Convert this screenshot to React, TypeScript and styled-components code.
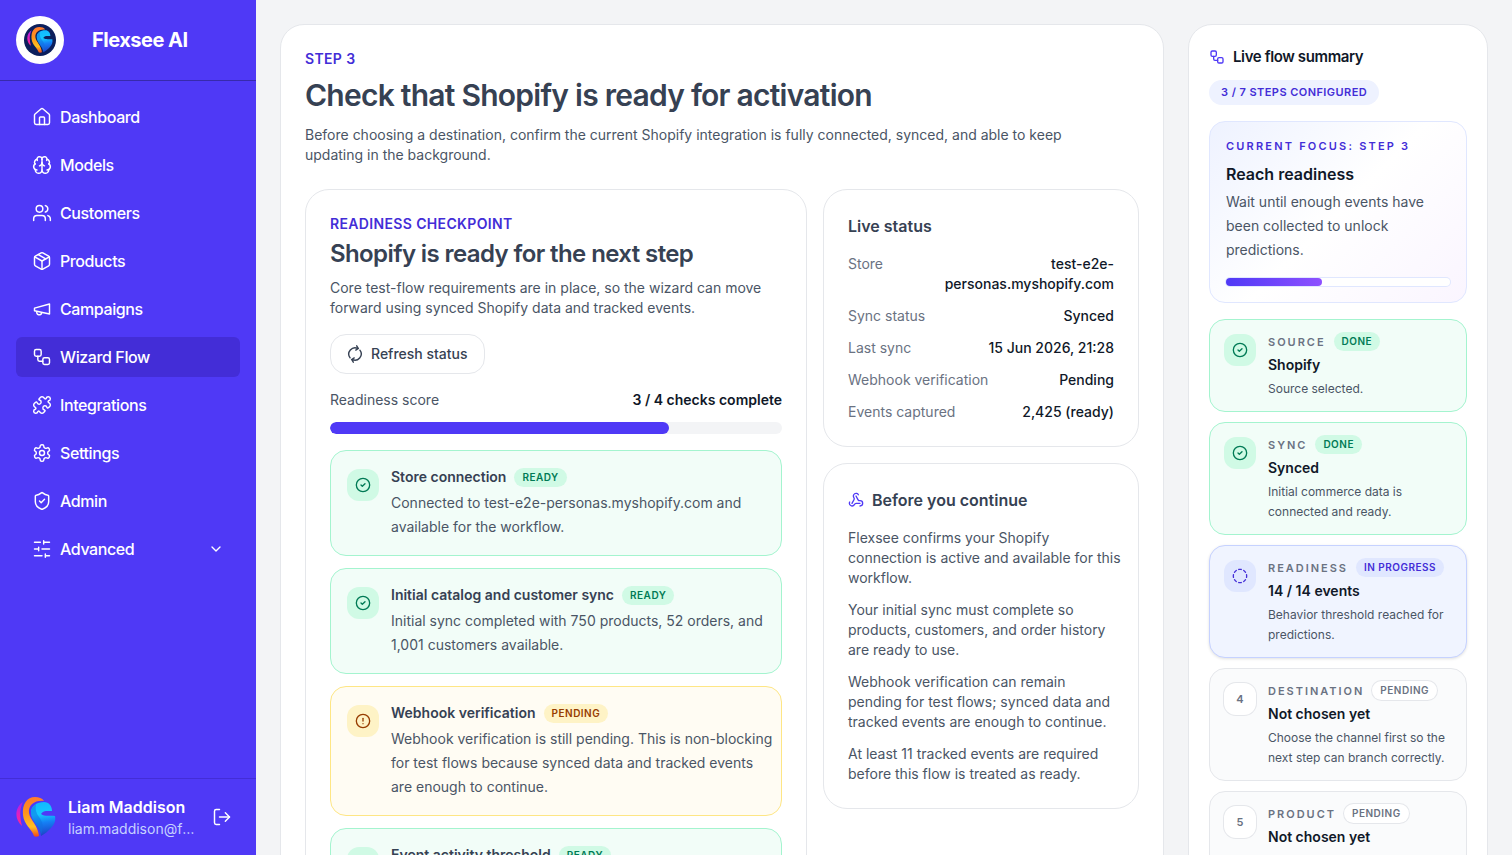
import React from "react";
import styled, { createGlobalStyle, css } from "styled-components";
import {
  Brain,
  ChevronDown,
  CircleAlert,
  CircleCheck,
  CircleDashed,
  House,
  LogOut,
  Package,
  Puzzle,
  ShieldCheck,
  Users,
  Webhook,
  Workflow,
} from "lucide-react";

const color = {
  indigo50: "#eef2ff",
  indigo100: "#e0e7ff",
  indigo200: "#c6d2ff",
  indigo600: "#4f39f6",
  indigo700: "#432dd7",
  indigo800: "#372aac",
  gray50: "#f9fafb",
  gray100: "#f3f4f6",
  gray200: "#e5e7eb",
  gray500: "#6a7282",
  gray600: "#4a5565",
  gray700: "#364153",
  gray900: "#101828",
};

type Tone = "done" | "pending" | "active" | "idle";

const tones: Record<Tone, { border: string; bg: string; tile: string; text: string }> = {
  done: { border: "#a4f4cf", bg: "#f2fdf8", tile: "#d0fae5", text: "#007a55" },
  pending: { border: "#fee685", bg: "#fffcf3", tile: "#fef3c6", text: "#973c00" },
  active: { border: color.indigo200, bg: "#f0f4ff", tile: color.indigo100, text: color.indigo700 },
  idle: { border: color.gray200, bg: "#fafbfc", tile: "#ffffff", text: color.gray500 },
};

const GlobalStyle = createGlobalStyle`
  *, *::before, *::after { box-sizing: border-box; }
  body {
    margin: 0;
    background: ${color.gray100};
    color: ${color.gray900};
    font-family: Inter, "Liberation Sans", sans-serif;
    font-size: 14px;
    line-height: 20px;
    -webkit-font-smoothing: antialiased;
  }
  h1, h2, h3, h4, p, dl, dd, ul, ol { margin: 0; padding: 0; }
  ul, ol { list-style: none; }
  button { font: inherit; cursor: pointer; }
`;

/* ---------- Shell ---------- */

const Shell = styled.div`
  display: flex;
  height: 100vh;
`;

const Sidebar = styled.aside`
  display: flex;
  flex-direction: column;
  flex: none;
  width: 256px;
  background: ${color.indigo600};
  color: #ffffff;
`;

const Brand = styled.header`
  display: flex;
  align-items: center;
  gap: 28px;
  padding: 16px;
  border-bottom: 1px solid ${color.indigo800};
`;

const BrandMark = styled.span`
  display: grid;
  place-items: center;
  width: 48px;
  height: 48px;
  border-radius: 50%;
  background: #ffffff;
`;

const BrandName = styled.span`
  font-size: 20px;
  line-height: 28px;
  font-weight: 700;
  letter-spacing: -0.025em;
`;

const Nav = styled.nav`
  flex: 1;
  padding: 16px;
`;

const NavList = styled.ul`
  display: flex;
  flex-direction: column;
  gap: 8px;
`;

const navItem = css<{ $active?: boolean }>`
  display: flex;
  align-items: center;
  gap: 8px;
  width: 100%;
  height: 40px;
  padding: 0 16px;
  border: 0;
  border-radius: 6px;
  background: ${(p) => (p.$active ? color.indigo700 : "transparent")};
  color: #ffffff;
  font-size: 16px;
  line-height: 24px;
  font-weight: 500;
  letter-spacing: -0.025em;
  text-align: left;
  text-decoration: none;
`;

const NavLink = styled.a<{ $active?: boolean }>`
  ${navItem}
`;

const NavToggle = styled.button<{ $active?: boolean }>`
  ${navItem}
`;

const NavText = styled.span`
  flex: 1;
`;

const Account = styled.footer`
  display: flex;
  align-items: center;
  gap: 12px;
  padding: 16px;
  border-top: 1px solid ${color.indigo700};
`;

const AccountText = styled.div`
  flex: 1;
  min-width: 0;
`;

const AccountName = styled.p`
  font-size: 16px;
  line-height: 24px;
  font-weight: 600;
`;

const AccountMail = styled.p`
  color: ${color.indigo200};
  overflow: hidden;
  text-overflow: ellipsis;
  white-space: nowrap;
`;

const IconButton = styled.button`
  display: grid;
  place-items: center;
  padding: 8px 8px 8px 4px;
  border: 0;
  background: transparent;
  color: #ffffff;
`;

/* ---------- Content ---------- */

const Content = styled.main`
  flex: 1;
  min-width: 0;
  overflow-y: auto;
  scrollbar-width: none;
  padding: 24px;
`;

const Columns = styled.div`
  display: grid;
  grid-template-columns: minmax(0, 1fr) 300px;
  align-items: start;
  gap: 24px;
`;

const Panel = styled.section`
  padding: 24px;
  border: 1px solid ${color.gray200};
  border-radius: 24px;
  background: #ffffff;
`;

const NotesPanel = styled(Panel)`
  padding-right: 16px;
`;

const SummaryPanel = styled(Panel).attrs({ as: "aside" })`
  padding: 20px;
`;

const Eyebrow = styled.p`
  color: ${color.indigo700};
  font-weight: 600;
  letter-spacing: 0.025em;
  text-transform: uppercase;
`;

const PageTitle = styled.h1`
  margin-top: 8px;
  color: ${color.gray700};
  font-size: 30px;
  line-height: 36px;
  font-weight: 600;
  letter-spacing: -0.025em;
`;

const Lead = styled.p`
  max-width: 768px;
  margin-top: 12px;
  color: ${color.gray600};
`;

const StepGrid = styled.div`
  display: grid;
  grid-template-columns: minmax(0, 1fr) 316px;
  align-items: start;
  gap: 16px;
  margin-top: 24px;
`;

const SideStack = styled.div`
  display: flex;
  flex-direction: column;
  gap: 16px;
`;

const PanelTitle = styled.h2`
  margin-top: 4px;
  color: ${color.gray700};
  font-size: 24px;
  line-height: 32px;
  font-weight: 600;
  letter-spacing: -0.025em;
`;

const PanelText = styled.p`
  margin-top: 8px;
  color: ${color.gray600};
`;

const RefreshButton = styled.button`
  display: inline-flex;
  align-items: center;
  gap: 8px;
  height: 40px;
  margin-top: 16px;
  padding: 0 16px;
  border: 1px solid ${color.gray200};
  border-radius: 16px;
  background: #ffffff;
  color: ${color.gray700};
  font-weight: 500;
`;

const ScoreRow = styled.div`
  display: flex;
  justify-content: space-between;
  margin-top: 16px;
  color: ${color.gray600};
`;

const ScoreValue = styled.span`
  color: ${color.gray900};
  font-weight: 600;
`;

const Meter = styled.div`
  height: 12px;
  margin-top: 12px;
  border-radius: 6px;
  background: ${color.gray100};
  overflow: hidden;
`;

const MeterFill = styled.div`
  height: 100%;
  border-radius: inherit;
  background: ${color.indigo600};
`;

const CheckList = styled.ul`
  display: flex;
  flex-direction: column;
  gap: 12px;
  margin-top: 16px;
`;

const CheckCard = styled.li<{ $tone: Tone }>`
  display: flex;
  align-items: flex-start;
  gap: 12px;
  padding: 16px 8px 16px 16px;
  border: 1px solid ${(p) => tones[p.$tone].border};
  border-radius: 16px;
  background: ${(p) => tones[p.$tone].bg};
`;

const Tile = styled.span<{ $tone: Tone }>`
  display: grid;
  place-items: center;
  flex: 0 0 32px;
  height: 32px;
  margin-top: 2px;
  border-radius: 12px;
  background: ${(p) => tones[p.$tone].tile};
  box-shadow: ${(p) => (p.$tone === "idle" ? `0 0 0 1px ${color.gray200}` : "none")};
  color: ${(p) => tones[p.$tone].text};
  font-size: 11px;
  font-weight: 600;
`;

const CardBody = styled.div`
  flex: 1;
  min-width: 0;
`;

const CheckHead = styled.div`
  display: flex;
  align-items: center;
  gap: 8px;
  height: 20px;
`;

const CheckTitle = styled.h3`
  color: ${color.gray700};
  font-size: 14px;
  line-height: 20px;
  font-weight: 600;
`;

const Badge = styled.span<{ $tone: Tone }>`
  padding: 2px 8px;
  border-radius: 10px;
  background: ${(p) => tones[p.$tone].tile};
  box-shadow: ${(p) => (p.$tone === "idle" ? `0 0 0 1px ${color.gray200}` : "none")};
  color: ${(p) => tones[p.$tone].text};
  font-size: 10px;
  line-height: 15px;
  font-weight: 600;
  letter-spacing: 0.05em;
  text-transform: uppercase;
  white-space: nowrap;
`;

const CheckText = styled.p`
  margin-top: 4px;
  color: ${color.gray600};
  line-height: 24px;
`;

const SideTitle = styled.h2`
  display: flex;
  align-items: center;
  gap: 8px;
  color: ${color.gray700};
  font-size: 16px;
  line-height: 24px;
  font-weight: 600;

  svg {
    color: ${color.indigo600};
  }
`;

const Facts = styled.dl`
  display: flex;
  flex-direction: column;
  gap: 12px;
  margin-top: 16px;
`;

const Fact = styled.div`
  display: flex;
  justify-content: space-between;
  gap: 16px;
  color: ${color.gray500};
`;

const FactValue = styled.dd`
  color: ${color.gray900};
  font-weight: 500;
  text-align: right;
`;

const Notes = styled.div`
  display: flex;
  flex-direction: column;
  gap: 12px;
  margin-top: 16px;
  color: ${color.gray600};
`;

/* ---------- Flow summary ---------- */

const SummaryTitle = styled(SideTitle)`
  color: ${color.gray900};
  font-size: 15px;
  line-height: 23px;
  letter-spacing: -0.025em;
`;

const CountPill = styled.span`
  display: inline-block;
  margin-top: 12px;
  padding: 4px 12px;
  border-radius: 13px;
  background: ${color.indigo50};
  color: ${color.indigo700};
  font-size: 11px;
  line-height: 17px;
  font-weight: 600;
  letter-spacing: 0.04em;
  text-transform: uppercase;
  vertical-align: top;
`;

const FocusCard = styled.div`
  margin-top: 16px;
  padding: 16px;
  border: 1px solid ${color.indigo100};
  border-radius: 16px;
  background: linear-gradient(135deg, #eef2ff, #ffffff 50%, #faf5ff);
`;

const FocusLabel = styled.p`
  color: ${color.indigo700};
  font-size: 11px;
  line-height: 16px;
  font-weight: 600;
  letter-spacing: 0.2em;
  text-transform: uppercase;
`;

const FocusTitle = styled.h3`
  margin-top: 8px;
  font-size: 16px;
  line-height: 24px;
  font-weight: 600;
`;

const FocusMeter = styled.div`
  height: 8px;
  margin-top: 16px;
  border-radius: 4px;
  background: #ffffff;
  box-shadow: 0 0 0 1px ${color.indigo100};
`;

const FocusFill = styled.div`
  height: 100%;
  border-radius: inherit;
  background: linear-gradient(90deg, ${color.indigo600}, #8e51ff);
`;

const StepList = styled.ol`
  display: flex;
  flex-direction: column;
  gap: 10px;
  margin-top: 16px;
`;

const StepCard = styled(CheckCard)`
  padding: 12px 14px;
  box-shadow: ${(p) => (p.$tone === "active" ? "0 1px 3px rgba(0, 0, 0, 0.12)" : "none")};
`;

const StepHead = styled.div`
  display: flex;
  align-items: center;
  gap: 8px;
  height: 19px;
`;

const StepLabel = styled.span`
  color: ${color.gray500};
  font-size: 11px;
  line-height: 16px;
  font-weight: 600;
  letter-spacing: 0.18em;
  text-transform: uppercase;
`;

const StepTitle = styled.h3`
  margin-top: 4px;
  font-size: 14px;
  line-height: 20px;
  font-weight: 600;
`;

const StepText = styled.p`
  margin-top: 4px;
  color: ${color.gray600};
  font-size: 12px;
`;

/* ---------- Drawings ---------- */

type IconProps = { size?: number; strokeWidth?: number };

function LineIcon({ size = 24, strokeWidth = 2, children }: IconProps & { children: React.ReactNode }) {
  return (
    <svg
      width={size}
      height={size}
      viewBox="0 0 24 24"
      fill="none"
      stroke="currentColor"
      strokeWidth={strokeWidth}
      strokeLinecap="round"
      strokeLinejoin="round"
      aria-hidden="true"
    >
      {children}
    </svg>
  );
}

function MegaphoneIcon(props: IconProps) {
  return (
    <LineIcon {...props}>
      <path d="m3 11 18-5v12L3 14v-3z" />
      <path d="M11.6 16.8a3 3 0 1 1-5.8-1.6" />
    </LineIcon>
  );
}

function GearIcon(props: IconProps) {
  return (
    <LineIcon {...props}>
      <path d="M12.22 2h-.44a2 2 0 0 0-2 2v.18a2 2 0 0 1-1 1.73l-.43.25a2 2 0 0 1-2 0l-.15-.08a2 2 0 0 0-2.73.73l-.22.38a2 2 0 0 0 .73 2.73l.15.1a2 2 0 0 1 1 1.72v.51a2 2 0 0 1-1 1.74l-.15.09a2 2 0 0 0-.73 2.73l.22.38a2 2 0 0 0 2.73.73l.15-.08a2 2 0 0 1 2 0l.43.25a2 2 0 0 1 1 1.73V20a2 2 0 0 0 2 2h.44a2 2 0 0 0 2-2v-.18a2 2 0 0 1 1-1.73l.43-.25a2 2 0 0 1 2 0l.15.08a2 2 0 0 0 2.73-.73l.22-.39a2 2 0 0 0-.73-2.73l-.15-.08a2 2 0 0 1-1-1.74v-.5a2 2 0 0 1 1-1.74l.15-.09a2 2 0 0 0 .73-2.73l-.22-.38a2 2 0 0 0-2.73-.73l-.15.08a2 2 0 0 1-2 0l-.43-.25a2 2 0 0 1-1-1.73V4a2 2 0 0 0-2-2z" />
      <circle cx="12" cy="12" r="3" />
    </LineIcon>
  );
}

function SlidersIcon(props: IconProps) {
  return (
    <LineIcon {...props}>
      <path d="M21 4h-7M10 4H3M21 12h-9M8 12H3M21 20h-5M12 20H3M14 2v4M8 10v4M16 18v4" />
    </LineIcon>
  );
}

function RefreshIcon() {
  return (
    <svg
      width="16"
      height="20"
      viewBox="-8 -10 16 20"
      fill="none"
      stroke="currentColor"
      strokeWidth="1.4"
      strokeLinecap="round"
      strokeLinejoin="round"
      aria-hidden="true"
    >
      <path d="M-4.9 3.8A6.2 6.2 0 0 1 3-5.4M1.7-8.2 3.4-5.5.8-3.9" />
      <path d="M4.9-3.8A6.2 6.2 0 0 1-3 5.4M-1.7 8.2-3.4 5.5-.8 3.9" />
    </svg>
  );
}

function FlexseeMark({ size, id }: { size: number; id: string }) {
  return (
    <svg width={size} height={size} viewBox="0 0 40 40" aria-hidden="true">
      <defs>
        <linearGradient id={`${id}-pink`} x1="0" y1="0" x2="0" y2="1">
          <stop offset="0" stopColor="#a21ff0" />
          <stop offset="0.5" stopColor="#e01fc0" />
          <stop offset="1" stopColor="#ff2a8a" />
        </linearGradient>
        <linearGradient id={`${id}-orange`} x1="0.5" y1="0" x2="0.5" y2="1">
          <stop offset="0" stopColor="#ff7a2e" />
          <stop offset="0.4" stopColor="#ff931c" />
          <stop offset="0.75" stopColor="#ffc020" />
          <stop offset="1" stopColor="#f0451c" />
        </linearGradient>
        <linearGradient id={`${id}-blue`} x1="0.5" y1="0" x2="0.6" y2="1">
          <stop offset="0" stopColor="#12b8ff" />
          <stop offset="0.35" stopColor="#14c8ff" />
          <stop offset="0.6" stopColor="#1580f5" />
          <stop offset="1" stopColor="#1c3fc4" />
        </linearGradient>
      </defs>
      <path d="M7 5C0 9-3 21 6 29 4 21 3 13 7 5Z" fill={`url(#${id}-pink)`} />
      <path
        d="M7 18C6 7 11 0 19 0c4 0 7 1 9 4C19 3 12 8 13 16c1 7 9 12 10 23-2 1-4 1-5 0-2-7-10-11-11-21Z"
        fill={`url(#${id}-orange)`}
      />
      <path
        d="M15 15c0-6 6-10 13-10 5 0 8 4 8 9-4 0-9-1-11 3 4 3 9 1 14 2 1 5-1 9-4 12s-6 6-10 8c0-9-10-14-10-24Z"
        fill={`url(#${id}-blue)`}
      />
      <path d="M15 15c0-3 2-6 5-8-1 5 0 9 3 13 4 5 5 11 2 18 0-8-10-13-10-23Z" fill="#0f6fe0" opacity="0.5" />
    </svg>
  );
}

function BrandBadge() {
  return (
    <svg width="32" height="32" viewBox="0 0 32 32" aria-hidden="true">
      <circle cx="16" cy="16" r="16" fill="#0c1f5c" />
      <g transform="translate(3 3)">
        <FlexseeMark size={26} id="brand" />
      </g>
    </svg>
  );
}

/* ---------- Data ---------- */

const navLinks = [
  { label: "Dashboard", icon: House },
  { label: "Models", icon: Brain },
  { label: "Customers", icon: Users },
  { label: "Products", icon: Package },
  { label: "Campaigns", icon: MegaphoneIcon },
  { label: "Wizard Flow", icon: Workflow, active: true },
  { label: "Integrations", icon: Puzzle },
  { label: "Settings", icon: GearIcon },
  { label: "Admin", icon: ShieldCheck },
];

const checks: { title: string; tone: Tone; badge: string; text: string }[] = [
  {
    title: "Store connection",
    tone: "done",
    badge: "Ready",
    text: "Connected to test-e2e-personas.myshopify.com and available for the workflow.",
  },
  {
    title: "Initial catalog and customer sync",
    tone: "done",
    badge: "Ready",
    text: "Initial sync completed with 750 products, 52 orders, and 1,001 customers available.",
  },
  {
    title: "Webhook verification",
    tone: "pending",
    badge: "Pending",
    text: "Webhook verification is still pending. This is non-blocking for test flows because synced data and tracked events are enough to continue.",
  },
  {
    title: "Event activity threshold",
    tone: "done",
    badge: "Ready",
    text: "2,425 tracked events captured.",
  },
];

const facts = [
  ["Store", "test-e2e-personas.myshopify.com"],
  ["Sync status", "Synced"],
  ["Last sync", "15 Jun 2026, 21:28"],
  ["Webhook verification", "Pending"],
  ["Events captured", "2,425 (ready)"],
];

const notes = [
  "Flexsee confirms your Shopify connection is active and available for this workflow.",
  "Your initial sync must complete so products, customers, and order history are ready to use.",
  "Webhook verification can remain pending for test flows; synced data and tracked events are enough to continue.",
  "At least 11 tracked events are required before this flow is treated as ready.",
];

const steps: { label: string; tone: Tone; badge: string; title: string; text: string }[] = [
  { label: "Source", tone: "done", badge: "Done", title: "Shopify", text: "Source selected." },
  {
    label: "Sync",
    tone: "done",
    badge: "Done",
    title: "Synced",
    text: "Initial commerce data is connected and ready.",
  },
  {
    label: "Readiness",
    tone: "active",
    badge: "In progress",
    title: "14 / 14 events",
    text: "Behavior threshold reached for predictions.",
  },
  {
    label: "Destination",
    tone: "idle",
    badge: "Pending",
    title: "Not chosen yet",
    text: "Choose the channel first so the next step can branch correctly.",
  },
  {
    label: "Product",
    tone: "idle",
    badge: "Pending",
    title: "Not chosen yet",
    text: "Choose the product for this flow.",
  },
];

function ToneIcon({ tone, step }: { tone: Tone; step?: number }) {
  if (tone === "done") return <CircleCheck size={16} />;
  if (tone === "pending") return <CircleAlert size={16} />;
  if (tone === "active") return <CircleDashed size={16} />;
  return <>{step}</>;
}

export default function App() {
  return (
    <>
      <GlobalStyle />
      <Shell>
        <Sidebar>
          <Brand>
            <BrandMark>
              <BrandBadge />
            </BrandMark>
            <BrandName>Flexsee AI</BrandName>
          </Brand>
          <Nav aria-label="Main">
            <NavList>
              {navLinks.map(({ label, icon: Icon, active }) => (
                <li key={label}>
                  <NavLink href="#" $active={active} aria-current={active ? "page" : undefined}>
                    <Icon size={20} strokeWidth={1.75} />
                    <NavText>{label}</NavText>
                  </NavLink>
                </li>
              ))}
              <li>
                <NavToggle type="button" aria-expanded="false">
                  <SlidersIcon size={20} strokeWidth={1.75} />
                  <NavText>Advanced</NavText>
                  <ChevronDown size={16} strokeWidth={2} />
                </NavToggle>
              </li>
            </NavList>
          </Nav>
          <Account>
            <FlexseeMark size={40} id="account" />
            <AccountText>
              <AccountName>Liam Maddison</AccountName>
              <AccountMail>liam.maddison@flexsee.ai</AccountMail>
            </AccountText>
            <IconButton type="button" aria-label="Log out">
              <LogOut size={20} strokeWidth={1.75} />
            </IconButton>
          </Account>
        </Sidebar>

        <Content>
          <Columns>
            <Panel>
              <Eyebrow>Step 3</Eyebrow>
              <PageTitle>Check that Shopify is ready for activation</PageTitle>
              <Lead>
                Before choosing a destination, confirm the current Shopify integration is fully connected, synced, and
                able to keep updating in the background.
              </Lead>

              <StepGrid>
                <Panel>
                  <Eyebrow>Readiness checkpoint</Eyebrow>
                  <PanelTitle>Shopify is ready for the next step</PanelTitle>
                  <PanelText>
                    Core test-flow requirements are in place, so the wizard can move forward using synced Shopify data
                    and tracked events.
                  </PanelText>
                  <RefreshButton type="button">
                    <RefreshIcon />
                    Refresh status
                  </RefreshButton>
                  <ScoreRow>
                    <span>Readiness score</span>
                    <ScoreValue>3 / 4 checks complete</ScoreValue>
                  </ScoreRow>
                  <Meter>
                    <MeterFill style={{ width: "75%" }} />
                  </Meter>
                  <CheckList>
                    {checks.map((check) => (
                      <CheckCard key={check.title} $tone={check.tone}>
                        <Tile $tone={check.tone}>
                          <ToneIcon tone={check.tone} />
                        </Tile>
                        <CardBody>
                          <CheckHead>
                            <CheckTitle>{check.title}</CheckTitle>
                            <Badge $tone={check.tone}>{check.badge}</Badge>
                          </CheckHead>
                          <CheckText>{check.text}</CheckText>
                        </CardBody>
                      </CheckCard>
                    ))}
                  </CheckList>
                </Panel>

                <SideStack>
                  <Panel>
                    <SideTitle>Live status</SideTitle>
                    <Facts>
                      {facts.map(([label, value]) => (
                        <Fact key={label}>
                          <dt>{label}</dt>
                          <FactValue>{value}</FactValue>
                        </Fact>
                      ))}
                    </Facts>
                  </Panel>
                  <NotesPanel>
                    <SideTitle>
                      <Webhook size={16} strokeWidth={2} />
                      Before you continue
                    </SideTitle>
                    <Notes>
                      {notes.map((note) => (
                        <p key={note}>{note}</p>
                      ))}
                    </Notes>
                  </NotesPanel>
                </SideStack>
              </StepGrid>
            </Panel>

            <SummaryPanel>
              <SummaryTitle>
                <Workflow size={16} strokeWidth={2} />
                Live flow summary
              </SummaryTitle>
              <CountPill>3 / 7 steps configured</CountPill>
              <FocusCard>
                <FocusLabel>Current focus: Step 3</FocusLabel>
                <FocusTitle>Reach readiness</FocusTitle>
                <CheckText>Wait until enough events have been collected to unlock predictions.</CheckText>
                <FocusMeter>
                  <FocusFill style={{ width: `${(3 / 7) * 100}%` }} />
                </FocusMeter>
              </FocusCard>
              <StepList>
                {steps.map((step, index) => (
                  <StepCard key={step.label} $tone={step.tone}>
                    <Tile $tone={step.tone}>
                      <ToneIcon tone={step.tone} step={index + 1} />
                    </Tile>
                    <CardBody>
                      <StepHead>
                        <StepLabel>{step.label}</StepLabel>
                        <Badge $tone={step.tone}>{step.badge}</Badge>
                      </StepHead>
                      <StepTitle>{step.title}</StepTitle>
                      <StepText>{step.text}</StepText>
                    </CardBody>
                  </StepCard>
                ))}
              </StepList>
            </SummaryPanel>
          </Columns>
        </Content>
      </Shell>
    </>
  );
}
